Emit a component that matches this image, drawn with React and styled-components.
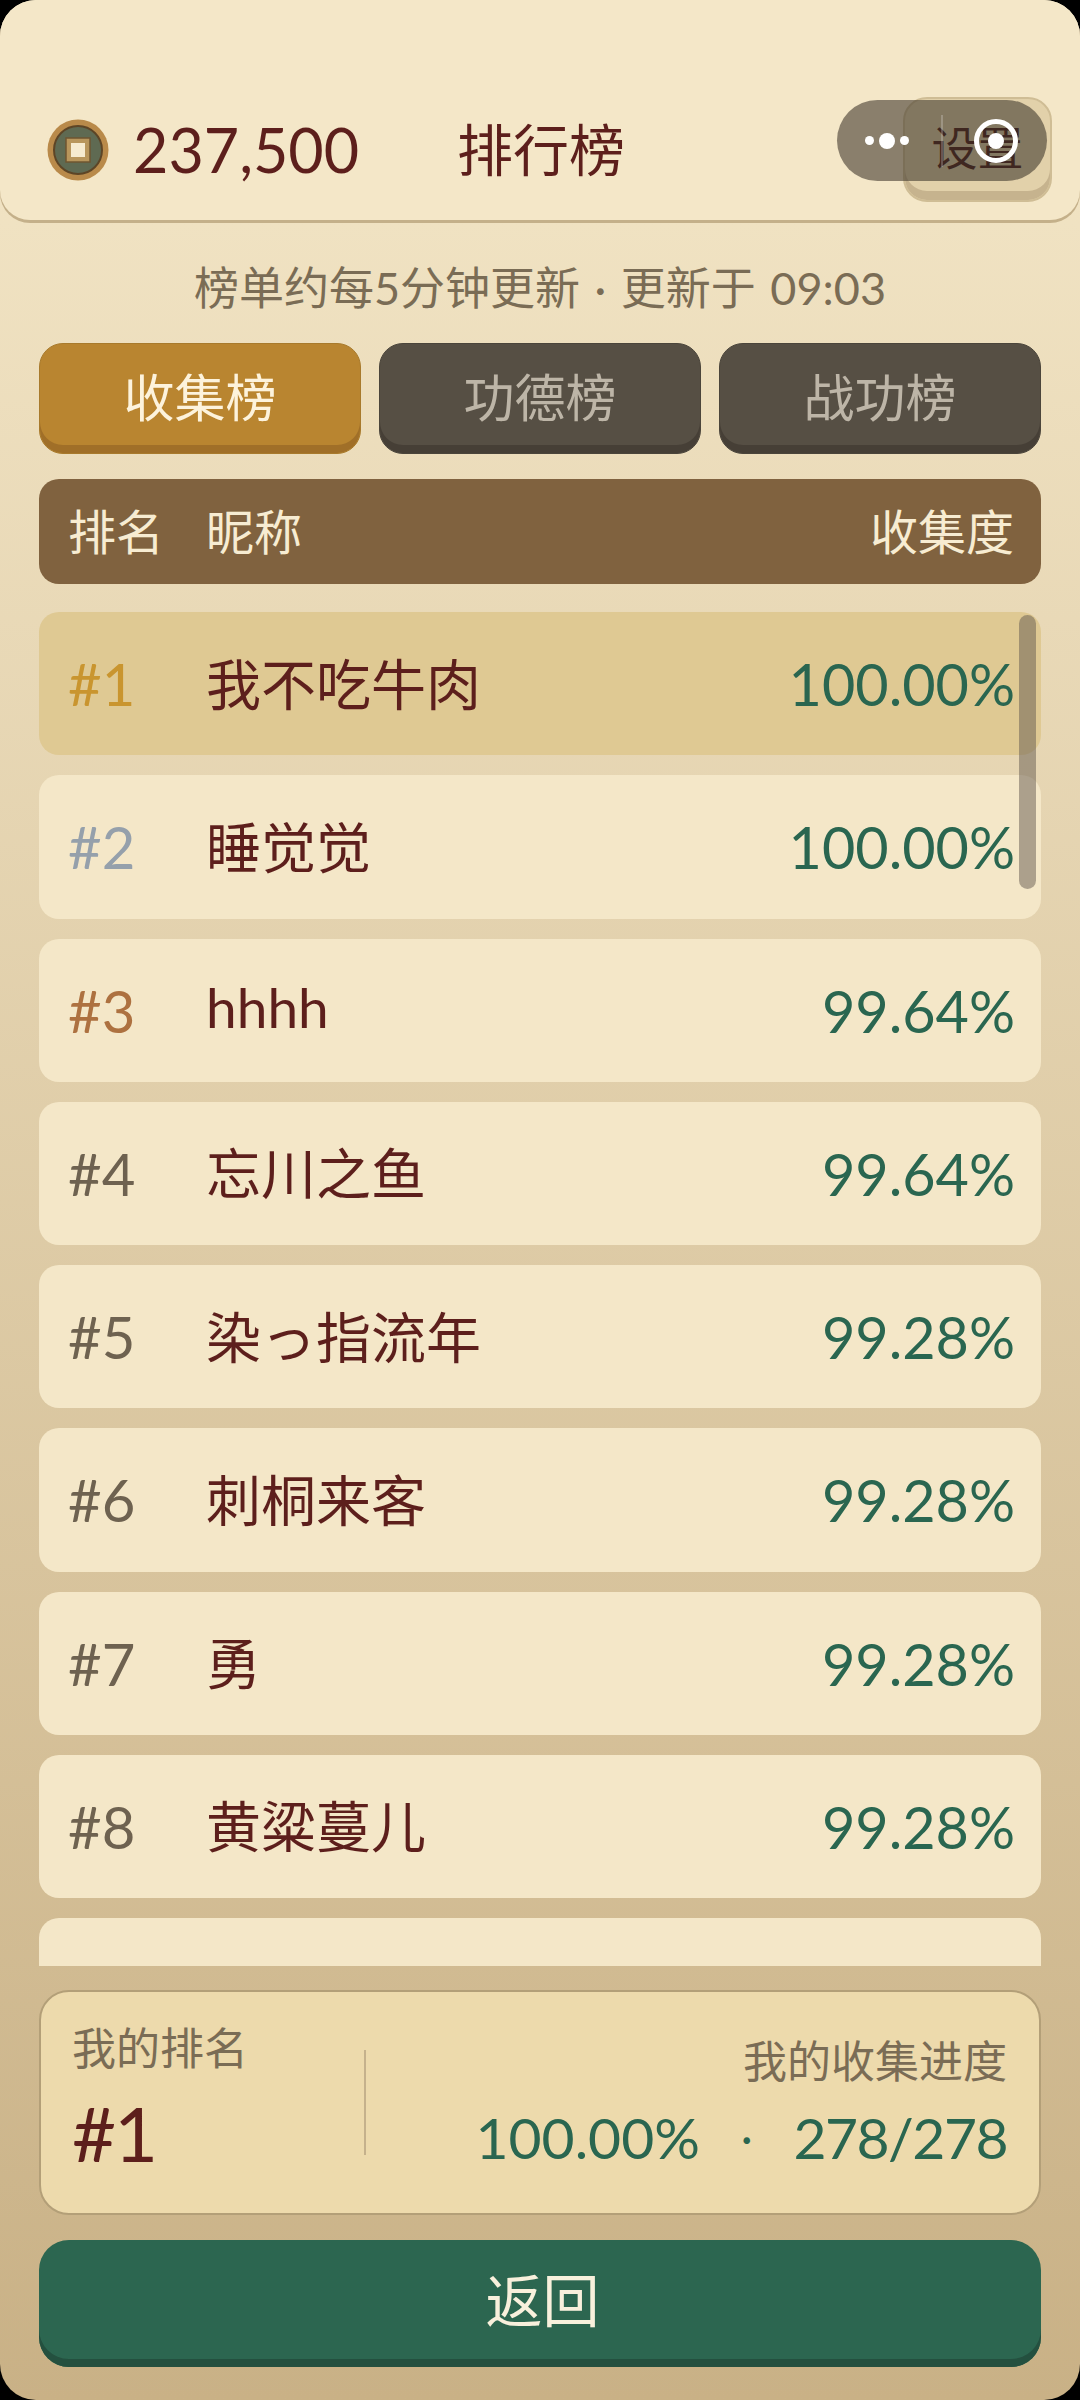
import React from "react";
import styled, { createGlobalStyle } from "styled-components";

const GlobalStyle = createGlobalStyle`
  html, body {
    margin: 0;
    padding: 0;
    background: #000;
  }
  * {
    box-sizing: border-box;
  }
`;

const players = [
  { rank: 1, name: "我不吃牛肉", value: "100.00%" },
  { rank: 2, name: "睡觉觉", value: "100.00%" },
  { rank: 3, name: "hhhh", value: "99.64%" },
  { rank: 4, name: "忘川之鱼", value: "99.64%" },
  { rank: 5, name: "染っ指流年", value: "99.28%" },
  { rank: 6, name: "刺桐来客", value: "99.28%" },
  { rank: 7, name: "勇", value: "99.28%" },
  { rank: 8, name: "黄粱蔓儿", value: "99.28%" },
  { rank: 9, name: "", value: "" },
];

const rankColors = { 1: "#c9952f", 2: "#95a0ab", 3: "#ad7140" };

function Coin() {
  return (
    <svg width="62" height="62" viewBox="0 0 62 62">
      <circle cx="31" cy="31" r="30.5" fill="#b98a4a" />
      <circle cx="31" cy="31" r="24" fill="#5f6a52" stroke="#5d4526" strokeWidth="2" />
      <rect x="19" y="19" width="24" height="24" fill="#b8965c" stroke="#6f5630" strokeWidth="1.5" />
      <rect x="24" y="24" width="14" height="14" fill="#f6ebd0" />
    </svg>
  );
}

export default function App() {
  return (
    <>
      <GlobalStyle />
      <Page>
        <Header>
          <CoinSlot>
            <Coin />
          </CoinSlot>
          <Balance>237,500</Balance>
          <Title>排行榜</Title>
          <SettingsButton>设置</SettingsButton>
        </Header>
        <Capsule>
          <Dots>
            <Dot $size={9} />
            <Dot $size={16} />
            <Dot $size={9} />
          </Dots>
          <Ring />
        </Capsule>

        <Notice>榜单约每5分钟更新 · 更新于 09:03</Notice>

        <Tabs>
          <Tab $active>收集榜</Tab>
          <Tab>功德榜</Tab>
          <Tab>战功榜</Tab>
        </Tabs>

        <TableHead>
          <HeadRank>排名</HeadRank>
          <span>昵称</span>
          <HeadValue>收集度</HeadValue>
        </TableHead>

        <ListWrap>
          <List>
            {players.map((p) => (
              <Row key={p.rank} $top={p.rank === 1}>
                {p.name && <Rank $color={rankColors[p.rank]}>#{p.rank}</Rank>}
                <Name>{p.name}</Name>
                <Value>{p.value}</Value>
              </Row>
            ))}
          </List>
          <ScrollThumb />
        </ListWrap>

        <MyCard>
          <MyRank>
            <MyLabel>我的排名</MyLabel>
            <MyRankNum>#1</MyRankNum>
          </MyRank>
          <Divider />
          <MyProgress>
            <MyLabel>我的收集进度</MyLabel>
            <MyValues>
              <span>100.00%</span>
              <Sep>·</Sep>
              <Count>278/278</Count>
            </MyValues>
          </MyProgress>
        </MyCard>

        <BackButton>返回</BackButton>
      </Page>
    </>
  );
}

const fonts = `Lato, "Noto Sans CJK SC", sans-serif`;

const Page = styled.div`
  position: relative;
  width: 1080px;
  height: 2400px;
  overflow: hidden;
  border-radius: 36px;
  display: flex;
  flex-direction: column;
  background: linear-gradient(180deg, #f4e7c8 0%, #c9b186 100%);
  font-family: ${fonts};
`;

const Header = styled.div`
  height: 220px;
  flex-shrink: 0;
  display: flex;
  align-items: center;
  padding: 97px 28px 18px 47px;
  background: #f4e7c8;
  border-radius: 0 0 30px 30px;
  box-shadow: 0 3px 0 #c4b08a;
`;

const CoinSlot = styled.div`
  width: 62px;
  height: 62px;
  margin-right: 24px;
  flex-shrink: 0;
`;

const Balance = styled.div`
  font-size: 61px;
  color: #5d1f1c;
  width: 227px;
  margin-right: 97px;
`;

const Title = styled.div`
  font-size: 56px;
  padding-bottom: 6px;
  color: #5d1f1c;
`;

const SettingsButton = styled.div`
  margin-left: auto;
  width: 149px;
  height: 105px;
  padding-bottom: 10px;
  display: flex;
  align-items: center;
  justify-content: center;
  font-size: 46px;
  color: #3a0c0a;
  background: #e2d1aa;
  border: 2px solid #cfbd95;
  border-radius: 24px;
  box-shadow: inset 0 -9px 0 #c6b38e;
`;

const Capsule = styled.div`
  position: absolute;
  top: 100px;
  right: 33px;
  width: 210px;
  height: 81px;
  display: flex;
  align-items: center;
  border-radius: 41px;
  background: rgba(67, 58, 47, 0.6);
  &::before {
    content: "";
    position: absolute;
    left: 104px;
    top: 15px;
    width: 2px;
    height: 52px;
    background: rgba(255, 255, 255, 0.22);
  }
`;

const Dots = styled.div`
  position: absolute;
  left: 28px;
  top: 0;
  height: 81px;
  display: flex;
  align-items: center;
  gap: 5px;
`;

const Dot = styled.i`
  display: block;
  width: ${(p) => p.$size}px;
  height: ${(p) => p.$size}px;
  border-radius: 50%;
  background: #fff;
`;

const Ring = styled.div`
  position: absolute;
  left: 137px;
  top: 19px;
  width: 44px;
  height: 44px;
  border-radius: 50%;
  border: 5px solid #fff;
  &::after {
    content: "";
    position: absolute;
    left: 9px;
    top: 9px;
    width: 16px;
    height: 16px;
    border-radius: 50%;
    background: #fff;
  }
`;

const Notice = styled.div`
  height: 123px;
  flex-shrink: 0;
  padding-top: 46px;
  text-align: center;
  font-size: 45px;
  line-height: 44px;
  word-spacing: 3px;
  color: #7a6c55;
`;

const Tabs = styled.div`
  display: grid;
  grid-template-columns: repeat(3, 1fr);
  gap: 18px;
  padding: 0 39px;
  flex-shrink: 0;
`;

const Tab = styled.div`
  height: 111px;
  padding-bottom: 8px;
  display: flex;
  align-items: center;
  justify-content: center;
  font-size: 51px;
  border-radius: 24px;
  color: ${(p) => (p.$active ? "#fdf3dc" : "#bdb5a7")};
  background: ${(p) => (p.$active ? "#b98530" : "#564f44")};
  border: 1px solid ${(p) => (p.$active ? "#a87a2c" : "#4b453b")};
  box-shadow: inset 0 -8px 0 ${(p) => (p.$active ? "#a06f28" : "#463f36")};
`;

const TableHead = styled.div`
  height: 105px;
  margin: 25px 39px 0;
  padding: 0 27px 5px 29px;
  flex-shrink: 0;
  display: flex;
  align-items: center;
  font-size: 48px;
  color: #f7ecd2;
  background: #80623f;
  border-radius: 20px;
`;

const HeadRank = styled.span`
  width: 138px;
`;

const HeadValue = styled.span`
  margin-left: auto;
`;

const ListWrap = styled.div`
  position: relative;
  height: 1354px;
  margin: 28px 39px 0;
  flex-shrink: 0;
  overflow: hidden;
`;

const List = styled.div`
  display: flex;
  flex-direction: column;
  gap: 20px;
`;

const Row = styled.div`
  height: 143.25px;
  flex-shrink: 0;
  padding: 0 26px 0 29px;
  display: grid;
  grid-template-columns: 138px 1fr auto;
  align-items: center;
  border-radius: 20px;
  background: ${(p) => (p.$top ? "#dfc993" : "#f4e7c8")};
`;

const Rank = styled.div`
  font-size: 58px;
  color: ${(p) => p.$color || "#6e6250"};
`;

const Name = styled.div`
  font-size: 55px;
  padding-bottom: 6px;
  color: #5d1f1c;
`;

const Value = styled.div`
  font-size: 57.5px;
  color: #2a6650;
`;

const ScrollThumb = styled.div`
  position: absolute;
  top: 3px;
  right: 5px;
  width: 17px;
  height: 274px;
  border-radius: 9px;
  background: rgba(100, 90, 80, 0.5);
`;

const MyCard = styled.div`
  position: relative;
  height: 225px;
  margin: 24px 39px 0;
  flex-shrink: 0;
  display: flex;
  align-items: center;
  background: #eddaac;
  border: 2px solid #b39f78;
  border-radius: 30px;
`;

const MyRank = styled.div`
  width: 323px;
  padding-left: 31px;
  align-self: stretch;
  display: flex;
  flex-direction: column;
  padding-top: 31px;
`;

const MyLabel = styled.div`
  font-size: 44px;
  line-height: 50px;
  color: #7a6c55;
`;

const MyRankNum = styled.div`
  margin-top: 15px;
  font-size: 76px;
  line-height: 90px;
  letter-spacing: -2px;
  color: #5d1f1c;
`;

const Divider = styled.div`
  width: 2px;
  height: 105px;
  background: #c5b18c;
`;

const MyProgress = styled.div`
  flex: 1;
  padding-right: 32px;
  display: flex;
  flex-direction: column;
  align-items: flex-end;
  gap: 18px;
`;

const MyValues = styled.div`
  display: flex;
  align-items: center;
  gap: 41px;
  font-size: 57px;
  line-height: 66px;
  color: #2a6650;
`;

const Count = styled.span`
  letter-spacing: -1.5px;
`;

const Sep = styled.span`
  font-size: 44px;
`;

const BackButton = styled.div`
  height: 127px;
  margin: 25px 39px 0;
  padding: 0 0 14px 5px;
  flex-shrink: 0;
  display: flex;
  align-items: center;
  justify-content: center;
  font-size: 57px;
  color: #f8f0dc;
  background: #2c6650;
  border-radius: 30px;
  box-shadow: inset 0 -8px 0 #24503f;
`;
